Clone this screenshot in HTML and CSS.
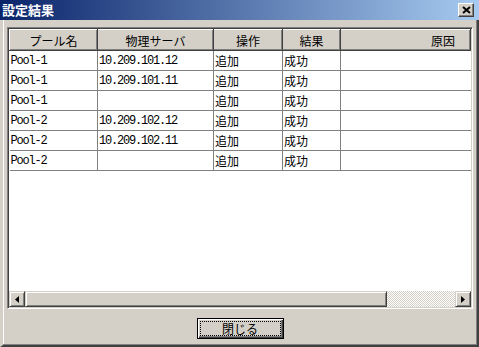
FILE: index.html
```html
<!DOCTYPE html>
<html lang="ja">
<head>
    <meta charset="UTF-8">
    <title>設定結果</title>
    <link rel="stylesheet" href="styles.css">
</head>
<body>
    <div class="window">
        <!-- Title bar -->
        <div class="titlebar">
            <span class="title">設定結果</span>
            <div class="close">
                <svg width="9" height="8" viewBox="0 0 9 8">
                    <path d="M1 1l7 6M8 1L1 7" stroke="#000" stroke-width="2"/>
                </svg>
            </div>
        </div>

        <div class="client">
            <!-- Result list -->
            <div class="listbox">
                <div class="viewport">
                    <table class="grid">
                        <colgroup>
                            <col class="c-pool">
                            <col class="c-server">
                            <col class="c-op">
                            <col class="c-result">
                            <col>
                        </colgroup>
                        <thead>
                            <tr>
                                <th>プール名</th>
                                <th>物理サーバ</th>
                                <th>操作</th>
                                <th>結果</th>
                                <th class="right">原因</th>
                            </tr>
                        </thead>
                        <tbody>
                            <tr><td>Pool-1</td><td>10.209.101.12</td><td class="jp">追加</td><td class="jp">成功</td><td></td></tr>
                            <tr><td>Pool-1</td><td>10.209.101.11</td><td class="jp">追加</td><td class="jp">成功</td><td></td></tr>
                            <tr><td>Pool-1</td><td></td><td class="jp">追加</td><td class="jp">成功</td><td></td></tr>
                            <tr><td>Pool-2</td><td>10.209.102.12</td><td class="jp">追加</td><td class="jp">成功</td><td></td></tr>
                            <tr><td>Pool-2</td><td>10.209.102.11</td><td class="jp">追加</td><td class="jp">成功</td><td></td></tr>
                            <tr><td>Pool-2</td><td></td><td class="jp">追加</td><td class="jp">成功</td><td></td></tr>
                        </tbody>
                    </table>
                </div>

                <!-- Horizontal scrollbar -->
                <div class="hscroll">
                    <div class="sb-btn">
                        <svg width="4" height="7" viewBox="0 0 4 7"><path d="M4 0v7L0 3.5z" fill="#000"/></svg>
                    </div>
                    <div class="sb-thumb"></div>
                    <div class="sb-track"></div>
                    <div class="sb-btn">
                        <svg width="4" height="7" viewBox="0 0 4 7"><path d="M0 0v7l4-3.5z" fill="#000"/></svg>
                    </div>
                </div>
            </div>

            <div class="actions">
                <button class="btn"><span class="focus">閉じる</span></button>
            </div>
        </div>
    </div>
</body>
</html>
```

FILE: styles.css
```css
body {
    margin: 0;
    padding: 0;
    background-color: #d4d0c8;
    font-family: "Noto Sans CJK JP", sans-serif;
    font-size: 12px;
    color: #000;
}

.window {
    width: 479px;
    height: 347px;
    display: flex;
    flex-direction: column;
    background-color: #d4d0c8;
}

/* Title bar */
.titlebar {
    height: 20px;
    display: flex;
    align-items: center;
    justify-content: space-between;
    padding: 0 5px 0 2px;
    background: linear-gradient(to right, #0a246a, #a6caf0);
}

.title {
    color: #fff;
    font-weight: bold;
    font-size: 13px;
    line-height: 20px;
}

.close {
    width: 16px;
    height: 14px;
    box-sizing: border-box;
    display: flex;
    align-items: center;
    justify-content: center;
    background-color: #d4d0c8;
    border: 1px solid;
    border-color: #fff #404040 #404040 #fff;
    box-shadow: inset -1px -1px 0 #808080;
}

.client {
    flex: 1;
    display: flex;
    flex-direction: column;
    border-left: 3px solid #d4d0c8;
    border-right: 2px solid #404040;
    border-bottom: 2px solid #404040;
    box-shadow: inset -1px -1px 0 #808080, inset 1px 0 0 #fff;
    padding: 7px 4px 0 4px;
}

/* List box */
.listbox {
    height: 278px;
    display: flex;
    flex-direction: column;
    border: 1px solid;
    border-color: #808080 #fff #fff #808080;
    box-shadow: inset 1px 1px 0 #404040, inset -1px -1px 0 #d4d0c8;
    padding: 1px;
    background-color: #fff;
}

.viewport {
    flex: 1;
    overflow: hidden;
    background-color: #fff;
}

.grid {
    width: 462px;
    border-collapse: collapse;
    table-layout: fixed;
}

.c-pool { width: 88px; }
.c-server { width: 116px; }
.c-op { width: 69px; }
.c-result { width: 58px; }

.grid th {
    height: 21px;
    padding: 0;
    box-sizing: border-box;
    background-color: #d4d0c8;
    font-weight: normal;
    text-align: center;
    border-top: 1px solid #fff;
    border-left: 1px solid #fff;
    border-right: 1px solid #404040;
    border-bottom: 1px solid #404040;
    box-shadow: inset -1px -1px 0 #808080;
}

.grid th.right {
    text-align: right;
    padding-right: 15px;
}

.grid td {
    height: 19px;
    padding: 0 0 0 1px;
    border-right: 1px solid #808080;
    border-bottom: 1px solid #808080;
    font-family: "Liberation Mono", "Noto Sans CJK JP", monospace;
    font-size: 12px;
    letter-spacing: -1.2px;
    color: #000;
    white-space: nowrap;
    overflow: hidden;
}

.grid td.jp {
    font-family: "Noto Sans CJK JP", sans-serif;
    letter-spacing: 0;
}

.grid td:last-child {
    border-right: none;
}

/* Scrollbar */
.hscroll {
    height: 16px;
    display: flex;
}

.sb-btn,
.sb-thumb {
    box-sizing: border-box;
    background-color: #d4d0c8;
    border: 1px solid;
    border-color: #d4d0c8 #404040 #404040 #d4d0c8;
    box-shadow: inset 1px 1px 0 #fff, inset -1px -1px 0 #808080;
}

.sb-btn {
    width: 16px;
    display: flex;
    align-items: center;
    justify-content: center;
}

.sb-thumb {
    width: 362px;
}

.sb-track {
    flex: 1;
    background: repeating-conic-gradient(#fff 0 25%, #d4d0c8 0 50%) 0 0 / 2px 2px;
}

/* Buttons */
.actions {
    display: flex;
    justify-content: center;
    padding-top: 9px;
}

.btn {
    width: 87px;
    height: 21px;
    padding: 2px;
    box-sizing: border-box;
    background-color: #d4d0c8;
    border: 1px solid #000;
    box-shadow: inset 1px 1px 0 #fff, inset -1px -1px 0 #404040, inset -2px -2px 0 #808080;
    font-family: "Noto Sans CJK JP", sans-serif;
    font-size: 12px;
    color: #000;
    display: flex;
}

.focus {
    flex: 1;
    border: 1px dotted #000;
    display: flex;
    align-items: center;
    justify-content: center;
    line-height: 13px;
}
```
